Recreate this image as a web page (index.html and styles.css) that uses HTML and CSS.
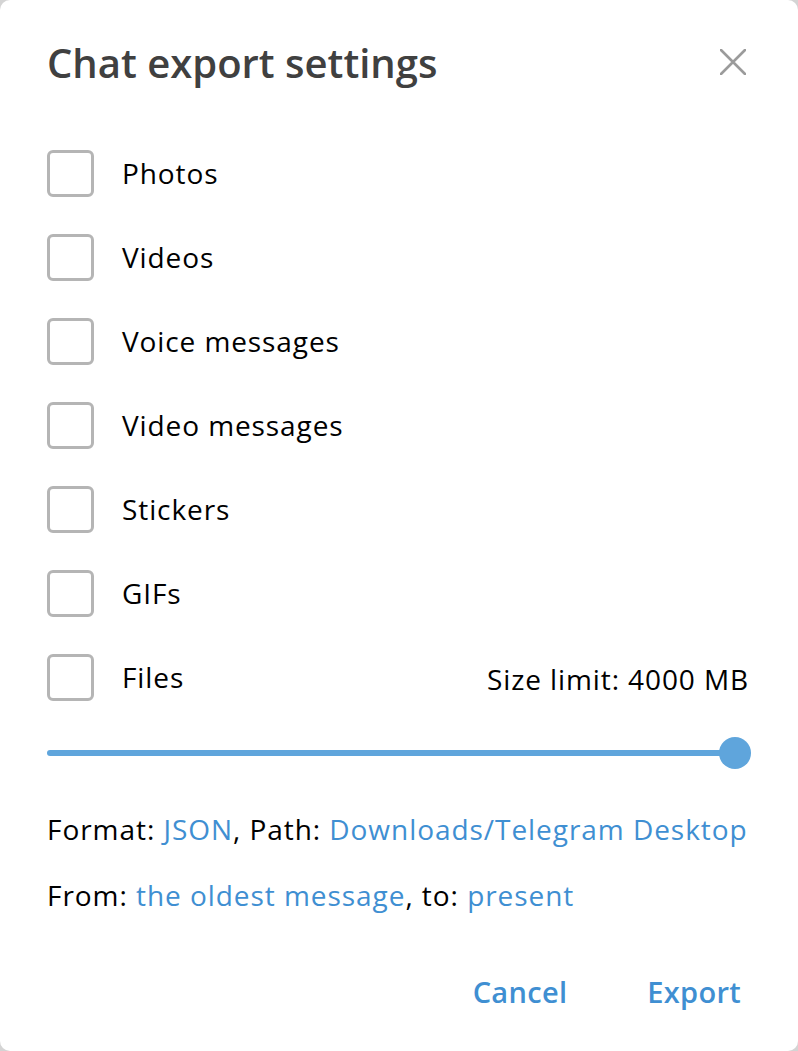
FILE: index.html
```html
<!DOCTYPE html>
<html lang="en">
<head>
<meta charset="utf-8">
<title>Chat export settings</title>
<link rel="stylesheet" href="styles.css">
</head>
<body>
<div class="dialog">
  <div class="header">
    <div class="title">Chat export settings</div>
    <svg class="close" width="26" height="26" viewBox="0 0 26 26"><path d="M1 1 L25 25 M25 1 L1 25" stroke="#9b9b9b" stroke-width="2.6" stroke-linecap="round" fill="none"/></svg>
  </div>
  <div class="options">
    <div class="row"><span class="box"></span><span class="label">Photos</span></div>
    <div class="row"><span class="box"></span><span class="label">Videos</span></div>
    <div class="row"><span class="box"></span><span class="label">Voice messages</span></div>
    <div class="row"><span class="box"></span><span class="label">Video messages</span></div>
    <div class="row"><span class="box"></span><span class="label">Stickers</span></div>
    <div class="row"><span class="box"></span><span class="label">GIFs</span></div>
    <div class="row"><span class="box"></span><span class="label">Files</span><span class="limit">Size limit: 4000 MB</span></div>
  </div>
  <div class="slider"><div class="track"></div><div class="knob"></div></div>
  <div class="info">Format: <span class="link">JSON</span>, Path: <span class="link">Downloads/Telegram Desktop</span></div>
  <div class="info second">From: <span class="link">the oldest message</span>, to: <span class="link">present</span></div>
  <div class="buttons">
    <span class="btn">Cancel</span>
    <span class="btn">Export</span>
  </div>
</div>
</body>
</html>
```

FILE: styles.css
```css
html, body {
  margin: 0;
  padding: 0;
  background: #d4d4d4;
}
body {
  font-family: "Open Sans", "Noto Sans", sans-serif;
}
.dialog {
  width: 798px;
  height: 1051px;
  box-sizing: border-box;
  background: #ffffff;
  border-radius: 10px;
  padding: 36px 47px 0 47px;
  overflow: hidden;
}
.header {
  display: flex;
  align-items: center;
  justify-content: space-between;
  height: 54px;
}
.title {
  font-size: 40px;
  line-height: 54px;
  font-weight: 600;
  color: #404040;
}
.close {
  margin-right: 5px;
  margin-top: -2px;
  display: block;
}
.options {
  margin-top: 41px;
}
.row {
  display: flex;
  align-items: center;
  height: 84px;
}
.box {
  width: 47px;
  height: 47px;
  box-sizing: border-box;
  border: 3px solid #b5b5b5;
  border-radius: 6px;
  flex: none;
}
.label {
  margin-left: 28px;
  font-size: 28px;
  line-height: 38px;
  letter-spacing: 0.9px;
  color: #000000;
}
.limit {
  margin-left: auto;
  margin-right: 2px;
  font-size: 28px;
  line-height: 38px;
  letter-spacing: 0.9px;
  color: #000000;
  padding-top: 4px;
}
.slider {
  display: flex;
  align-items: center;
  height: 32px;
  margin-top: 18px;
}
.track {
  flex: 1;
  height: 6px;
  background: #5fa5dc;
  border-radius: 3px;
}
.knob {
  width: 32px;
  height: 32px;
  border-radius: 50%;
  background: #5fa5dc;
  margin-left: -16px;
  flex: none;
}
.info {
  margin-top: 41px;
  font-size: 28px;
  line-height: 38px;
  letter-spacing: 0.95px;
  color: #000000;
}
.info.second {
  margin-top: 28px;
}
.link {
  color: #3f8fd2;
}
.buttons {
  display: flex;
  justify-content: flex-end;
  gap: 80px;
  margin-top: 59px;
  padding-right: 10px;
}
.btn {
  font-size: 29px;
  line-height: 38px;
  font-weight: 600;
  letter-spacing: 0.3px;
  color: #3f8fd2;
}
```
